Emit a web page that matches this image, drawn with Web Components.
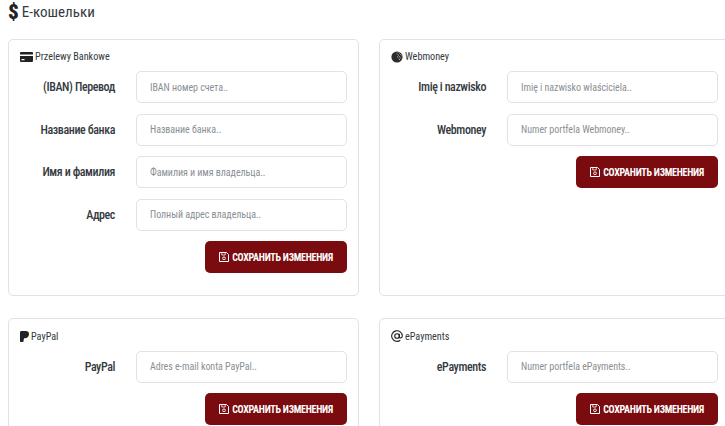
<!DOCTYPE html>
<html>
<head>
<meta charset="utf-8">
<style>
  html, body { margin: 0; padding: 0; background: #fff; overflow: hidden; height: 100%; }
  body { font-family: Roboto, "Liberation Sans", sans-serif; font-stretch: 75%; color: #343a40; }
  .cards { display: grid; grid-template-columns: 351px 351px; column-gap: 20px; row-gap: 22.4px; width: 730px; padding-left: 8px; }
</style>
</head>
<body>
<page-heading>E-кошельки</page-heading>
<div class="cards">
  <wallet-card title="Przelewy Bankowe" icon="card">
    <field-row label="(IBAN) Перевод" placeholder="IBAN номер счета.."></field-row>
    <field-row label="Название банка" placeholder="Название банка.."></field-row>
    <field-row label="Имя и фамилия" placeholder="Фамилия и имя владельца.."></field-row>
    <field-row label="Адрес" placeholder="Полный адрес владельца.."></field-row>
    <save-button>Сохранить изменения</save-button>
  </wallet-card>
  <wallet-card title="Webmoney" icon="globe">
    <field-row label="Imię i nazwisko" placeholder="Imię i nazwisko właściciela.."></field-row>
    <field-row label="Webmoney" placeholder="Numer portfela Webmoney.."></field-row>
    <save-button>Сохранить изменения</save-button>
  </wallet-card>
  <wallet-card title="PayPal" icon="paypal">
    <field-row label="PayPal" placeholder="Adres e-mail konta PayPal.."></field-row>
    <save-button>Сохранить изменения</save-button>
  </wallet-card>
  <wallet-card title="ePayments" icon="at">
    <field-row label="ePayments" placeholder="Numer portfela ePayments.."></field-row>
    <save-button>Сохранить изменения</save-button>
  </wallet-card>
</div>

<script>
const ICONS = {
  card: `<svg width="13" height="10" viewBox="0 0 13 10"><path fill="#222" d="M1 0h11a1 1 0 0 1 1 1v1.500H0V1a1 1 0 0 1 1-1zM0 4h13v5a1 1 0 0 1-1 1H1a1 1 0 0 1-1-1zM1.500 7v1.300h3V7z"/></svg>`,
  globe: `<svg width="12" height="12" viewBox="0 0 12 12"><circle cx="6" cy="6" r="5.600" fill="#2b2b2b"/><path stroke="#ccc" stroke-width=".9" stroke-dasharray="1 .8" fill="none" d="M6.500 1c2 .8 3.500 2.300 4.300 4.300M5.500 2.800c2 1 3.500 2.700 4.300 5M6 5.500c1.500.8 2.300 2 2.700 4"/></svg>`,
  paypal: `<svg width="9" height="11" viewBox="0 0 9 11"><path fill="#222" d="M1.500 0h4C8 0 9 1.300 9 3c0 2.500-1.700 4.200-4 4.200H4L3.500 10c0 .6-.4 1-1 1H1c-.6 0-1-.4-1-1V1.500C0 .6.600 0 1.500 0z"/></svg>`,
  at: `<svg width="12" height="12" viewBox="0 0 12 12"><g fill="none" stroke="#222" stroke-width="1.100"><circle cx="6" cy="6" r="2.300"/><path d="M8.300 3.800v3c0 1.700 3 1.500 3-.8a5.300 5.300 0 1 0-2 4.200"/></g></svg>`
};

class PageHeading extends HTMLElement {
  constructor() {
    super();
    this.attachShadow({ mode: 'open' }).innerHTML = `
      <style>
        :host { display: flex; align-items: center; gap: 3px; height: 39px; padding: 0 0 15px 8px; box-sizing: border-box; font-size: 15px; font-weight: 400; color: #343a40; }
        b { font-size: 21px; font-weight: 900; color: #222; }
      </style>
      <b>$</b><slot></slot>`;
  }
}

class WalletCard extends HTMLElement {
  constructor() {
    super();
    this.attachShadow({ mode: 'open' }).innerHTML = `
      <style>
        :host { display: flex; flex-direction: column; box-sizing: border-box; height: 257px; padding: 10.3px 11px 0 11px; border: 1px solid #e0e2e4; border-radius: 5px; background: #fff; }
        .title { display: flex; align-items: flex-start; gap: 2px; height: 21px; font-size: 10.2px; line-height: 13px; color: #343a40; }
        .icon { display: flex; height: 13px; align-items: center; }
        .body { display: flex; flex-direction: column; gap: 10.5px; }
      </style>
      <div class="title"><span class="icon"></span><span class="text"></span></div>
      <div class="body"><slot></slot></div>`;
  }
  connectedCallback() {
    this.shadowRoot.querySelector('.icon').innerHTML = ICONS[this.getAttribute('icon')] || '';
    this.shadowRoot.querySelector('.text').textContent = this.getAttribute('title');
    this.removeAttribute('title');
  }
}

class FieldRow extends HTMLElement {
  constructor() {
    super();
    this.attachShadow({ mode: 'open' }).innerHTML = `
      <style>
        :host { display: grid; grid-template-columns: 95px 211px; column-gap: 21px; align-items: center; }
        label { text-align: right; font-size: 12px; font-weight: 500; letter-spacing: -.4px; color: #343a40; white-space: nowrap; }
        input { box-sizing: border-box; width: 211px; height: 32px; padding: 0 13px; border: 1px solid #e0e2e4; border-radius: 5px; font: inherit; font-size: 10px; letter-spacing: -.05px; outline: none; }
        input::placeholder { color: #8a8f94; opacity: 1; }
      </style>
      <label></label><input type="text">`;
  }
  connectedCallback() {
    this.shadowRoot.querySelector('label').textContent = this.getAttribute('label');
    this.shadowRoot.querySelector('input').placeholder = this.getAttribute('placeholder');
  }
}

class SaveButton extends HTMLElement {
  constructor() {
    super();
    this.attachShadow({ mode: 'open' }).innerHTML = `
      <style>
        :host { display: block; align-self: flex-end; }
        button { display: flex; align-items: center; justify-content: center; gap: 3px; width: 142px; height: 32px; padding: 0; border: 0; border-radius: 5px; background: #7a0b0e; color: #fff; font: inherit; font-size: 10px; font-weight: 700; letter-spacing: -.27px; text-transform: uppercase; }
      </style>
      <button>
        <svg width="10" height="10" viewBox="0 0 10 10"><path fill="none" stroke="#fff" d="M.5.5h7l2 2v7h-9z"/><path fill="none" stroke="#fff" stroke-width=".8" d="M2.800 1v2h3.400V1"/><circle cx="5" cy="6.300" r="1.400" fill="none" stroke="#fff" stroke-width=".9"/></svg>
        <slot></slot>
      </button>`;
  }
}

customElements.define('page-heading', PageHeading);
customElements.define('wallet-card', WalletCard);
customElements.define('field-row', FieldRow);
customElements.define('save-button', SaveButton);
</script>
</body>
</html>
